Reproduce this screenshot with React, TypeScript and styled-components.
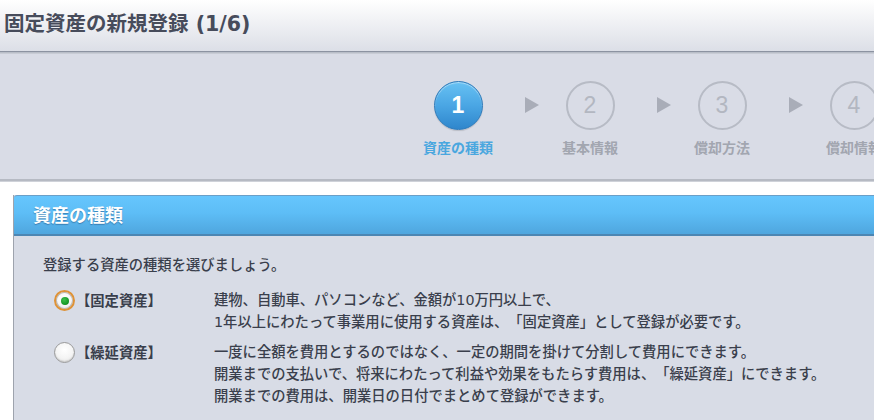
import React from 'react';
import styled, { createGlobalStyle } from 'styled-components';

const GlobalStyles = createGlobalStyle`
  html, body {
    margin: 0;
    padding: 0;
    background: #ffffff;
    overflow: hidden;
  }
  body {
    font-family: "DejaVu Sans", "Noto Sans CJK JP", sans-serif;
    color: #3d4250;
    text-spacing-trim: space-all;
  }
`;

const steps = [
  { num: 1, label: '資産の種類' },
  { num: 2, label: '基本情報' },
  { num: 3, label: '償却方法' },
  { num: 4, label: '償却情報' },
  { num: 5, label: '確認' },
  { num: 6, label: '完了' },
];

export default function App() {
  return (
    <>
      <GlobalStyles />
      <Page lang="ja">
        <TitleBar>
          <Title>固定資産の新規登録 (1/6)</Title>
        </TitleBar>

        <StepBar>
          <StepList>
            {steps.map((s, i) => (
              <React.Fragment key={s.num}>
                {i > 0 && <Arrow />}
                <Step>
                  <StepCircle $active={i === 0}>{s.num}</StepCircle>
                  <StepLabel $active={i === 0}>{s.label}</StepLabel>
                </Step>
              </React.Fragment>
            ))}
          </StepList>
        </StepBar>

        <Content>
          <Panel>
            <PanelHeader>資産の種類</PanelHeader>
            <PanelBody>
              <Lead>登録する資産の種類を選びましょう。</Lead>
              <OptionList>
                <Option>
                  <Radio $checked />
                  <OptionLabel>【固定資産】</OptionLabel>
                  <OptionText>
                    建物、自動車、パソコンなど、金額が10万円以上で、
                    <br />
                    1年以上にわたって事業用に使用する資産は、「固定資産」として登録が必要です。
                  </OptionText>
                </Option>
                <Option>
                  <Radio />
                  <OptionLabel>【繰延資産】</OptionLabel>
                  <OptionText>
                    一度に全額を費用とするのではなく、一定の期間を掛けて分割して費用にできます。
                    <br />
                    開業までの支払いで、将来にわたって利益や効果をもたらす費用は、「繰延資産」にできます。
                    <br />
                    開業までの費用は、開業日の日付でまとめて登録ができます。
                  </OptionText>
                </Option>
              </OptionList>
            </PanelBody>
          </Panel>
        </Content>
      </Page>
    </>
  );
}

const Page = styled.div`
  width: 874px;
  min-height: 420px;
  overflow: hidden;
`;

const TitleBar = styled.header`
  height: 51px;
  display: flex;
  align-items: center;
  padding-left: 4px;
  background: linear-gradient(to bottom, #ffffff 0%, #f1f2f5 40%, #dcdfe7 100%);
  border-bottom: 1px solid #8c93a1;
  box-shadow: 0 1px 0 #b9bec8, 0 2px 0 #c8ccd5;
  position: relative;
  z-index: 1;
`;

const Title = styled.h1`
  margin: 0 0 8px 0;
  font-size: 20.5px;
  font-weight: bold;
  color: #474c5b;
  white-space: nowrap;
`;

const StepBar = styled.div`
  height: 127px;
  background: #d9dce6;
  border-bottom: 2px solid #b6bac3;
  box-shadow: 0 1px 0 #cfd2d9;
`;

const StepList = styled.div`
  display: flex;
  align-items: flex-start;
  padding: 29px 0 0 418px;
  white-space: nowrap;
`;

const Step = styled.div`
  width: 80px;
  flex: none;
  display: flex;
  flex-direction: column;
  align-items: center;
`;

const StepCircle = styled.div<{ $active?: boolean }>`
  width: 49px;
  height: 49px;
  box-sizing: border-box;
  border-radius: 50%;
  display: flex;
  align-items: center;
  justify-content: center;
  font-family: "Liberation Sans", Arial, sans-serif;
  font-size: 23px;
  font-weight: bold;
  ${(p) =>
    p.$active
      ? `
    color: #ffffff;
    background: linear-gradient(to bottom, #67c1f3 0%, #4aa6e4 50%, #2f86cc 100%);
    border: 1px solid #2b79b9;
    box-shadow: inset 0 1px 1px rgba(255,255,255,0.5), 0 1px 1px rgba(0,0,0,0.15);
  `
      : `
    color: #b3b7c1;
    font-weight: normal;
    background: transparent;
    border: 2px solid #b7bbc5;
  `}
`;

const StepLabel = styled.div<{ $active?: boolean }>`
  margin-top: 8px;
  font-family: "Noto Sans CJK JP", sans-serif;
  font-size: 14px;
  font-weight: bold;
  line-height: 18px;
  color: ${(p) => (p.$active ? '#4aa7df' : '#a2a6b0')};
`;

const Arrow = styled.div`
  flex: none;
  width: 0;
  height: 0;
  margin: 16px 11px 0 27px;
  border-top: 8.5px solid transparent;
  border-bottom: 8.5px solid transparent;
  border-left: 14px solid #a9adb8;
`;

const Content = styled.main`
  padding: 14px 0 0 13px;
`;

const Panel = styled.section`
  width: 900px;
  border-left: 1px solid #9ea3ad;
  background: #d8dce6;
  min-height: 230px;
`;

const PanelHeader = styled.h2`
  margin: 0;
  height: 41px;
  box-sizing: border-box;
  display: flex;
  align-items: center;
  padding: 0 0 2px 19px;
  font-family: "Noto Sans CJK JP", sans-serif;
  font-size: 18px;
  font-weight: bold;
  color: #ffffff;
  text-shadow: 0 1px 1px rgba(30, 80, 130, 0.55);
  background: linear-gradient(to bottom, #66c6fd 0%, #5dbdf6 45%, #4fa6de 100%);
  border-top: 1px solid #6b9fc7;
  border-bottom: 2px solid #4c86b3;
  border-radius: 3px 0 0 0;
`;

const PanelBody = styled.div`
  padding: 18px 0 20px 29px;
`;

const Lead = styled.p`
  margin: 0;
  font-size: 14.3px;
  font-weight: 500;
  line-height: 22px;
  color: #3a3f4c;
`;

const OptionList = styled.div`
  margin-top: 13px;
  display: flex;
  flex-direction: column;
  gap: 8px;
`;

const Option = styled.div`
  display: flex;
  align-items: flex-start;
`;

const Radio = styled.span<{ $checked?: boolean }>`
  flex: none;
  position: relative;
  width: 21px;
  height: 21px;
  box-sizing: border-box;
  margin: 1px 0 0 11px;
  border-radius: 50%;
  background: radial-gradient(circle at 50% 35%, #ffffff 0%, #f4f4f4 55%, #dcdcdc 100%);
  ${(p) =>
    p.$checked
      ? `
    border: 2px solid #de9237;
    box-shadow: inset 0 0 0 1px #b9b9b9;
    &::after {
      content: '';
      position: absolute;
      left: 4.5px;
      top: 4.5px;
      width: 8px;
      height: 8px;
      border-radius: 50%;
      background: radial-gradient(circle at 40% 35%, #3cc04a 0%, #129423 70%, #0c7a1b 100%);
    }
  `
      : `
    border: 1.5px solid #9a9a9a;
    box-shadow: inset 0 -1px 1px rgba(0,0,0,0.12);
  `}
`;

const OptionLabel = styled.span`
  flex: none;
  width: 138px;
  margin-left: 1px;
  font-family: "Noto Sans CJK JP", sans-serif;
  font-size: 14.3px;
  font-weight: bold;
  line-height: 22px;
  color: #3a3f4c;
`;

const OptionText = styled.p`
  margin: 0;
  font-size: 14.3px;
  font-weight: 500;
  line-height: 22px;
  color: #3a3f4c;
  white-space: nowrap;
`;
